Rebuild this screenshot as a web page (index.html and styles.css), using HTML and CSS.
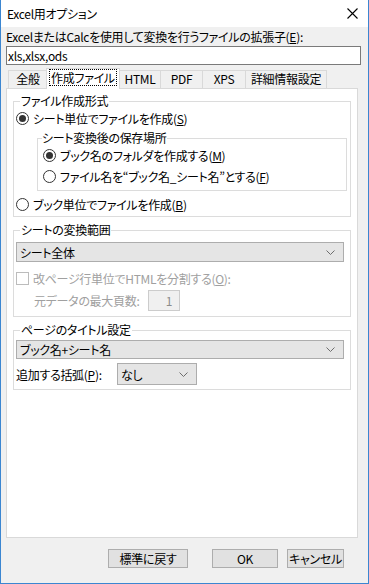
FILE: index.html
```html
<!DOCTYPE html>
<html lang="ja">

<head>
    <meta charset="UTF-8">
    <title>Excel用オプション</title>
    <link rel="stylesheet" href="styles.css">
</head>

<body>
    <div class="window">
        <div class="titlebar">
            <span class="title">Excel用オプション</span>
            <svg class="close" width="11" height="11" viewBox="0 0 11 11">
                <path d="M0.5 0.5 L10.5 10.5 M10.5 0.5 L0.5 10.5" stroke="#000" stroke-width="1.1" fill="none" />
            </svg>
        </div>

        <div class="client">
            <div class="ext-label">ExcelまたはCalcを使用して変換を行うファイルの拡張子(<u>E</u>):</div>
            <div class="textbox">xls,xlsx,ods</div>

            <div class="tabs">
                <div class="tab t-general">全般</div>
                <div class="tab t-file active"><span class="focus">作成ファイル</span></div>
                <div class="tab t-html">HTML</div>
                <div class="tab t-pdf">PDF</div>
                <div class="tab t-xps">XPS</div>
                <div class="tab t-detail">詳細情報設定</div>
            </div>

            <div class="panel">
                <fieldset class="group g-format">
                    <legend>ファイル作成形式</legend>
                    <div class="opt"><span class="radio on"></span><span>シート単位でファイルを作成(<u>S</u>)</span></div>
                    <fieldset class="group inner">
                        <legend>シート変換後の保存場所</legend>
                        <div class="opt"><span class="radio on"></span><span>ブック名のフォルダを作成する(<u>M</u>)</span></div>
                        <div class="opt"><span class="radio"></span><span>ファイル名を“ブック名_シート名”とする(<u>F</u>)</span></div>
                    </fieldset>
                    <div class="opt opt-book"><span class="radio"></span><span>ブック単位でファイルを作成(<u>B</u>)</span></div>
                </fieldset>

                <fieldset class="group g-range">
                    <legend>シートの変換範囲</legend>
                    <div class="combo wide">
                        <span>シート全体</span>
                        <svg class="arrow" width="9" height="5" viewBox="0 0 9 5"><path d="M0.5 0.5 L4.5 4.5 L8.5 0.5" stroke="#6d6d6d" fill="none" /></svg>
                    </div>
                    <div class="opt disabled"><span class="check"></span><span>改ページ行単位でHTMLを分割する(<u>O</u>):</span></div>
                    <div class="spin-row disabled">
                        <span class="spin-label">元データの最大頁数:</span>
                        <span class="spin">1</span>
                    </div>
                </fieldset>

                <fieldset class="group g-title">
                    <legend>ページのタイトル設定</legend>
                    <div class="combo wide">
                        <span>ブック名+シート名</span>
                        <svg class="arrow" width="9" height="5" viewBox="0 0 9 5"><path d="M0.5 0.5 L4.5 4.5 L8.5 0.5" stroke="#6d6d6d" fill="none" /></svg>
                    </div>
                    <div class="paren-row">
                        <span class="paren-label">追加する括弧(<u>P</u>):</span>
                        <div class="combo small">
                            <span>なし</span>
                            <svg class="arrow" width="9" height="5" viewBox="0 0 9 5"><path d="M0.5 0.5 L4.5 4.5 L8.5 0.5" stroke="#6d6d6d" fill="none" /></svg>
                        </div>
                    </div>
                </fieldset>
            </div>

            <div class="buttons">
                <button class="btn b-reset">標準に戻す</button>
                <button class="btn b-ok">OK</button>
                <button class="btn b-cancel">キャンセル</button>
            </div>
        </div>
    </div>
</body>

</html>
```

FILE: styles.css
```css
* {
    margin: 0;
    padding: 0;
    box-sizing: border-box;
}

body {
    font-family: "Noto Sans CJK JP", "Liberation Sans", sans-serif;
    font-size: 12px;
    font-feature-settings: "palt";
    letter-spacing: -0.3px;
    color: #000;
    background: #fff;
}

u {
    text-decoration: underline;
    text-underline-offset: 1px;
}

.window {
    width: 369px;
    height: 584px;
    display: flex;
    flex-direction: column;
    background: #f0f0f0;
    border: 1px solid #3b86d1;
    border-top: none;
}

.titlebar {
    height: 27px;
    flex: none;
    display: flex;
    align-items: center;
    justify-content: space-between;
    padding: 0 10px 0 6px;
    background: #fff;
}

.title {
    line-height: 14px;
}

.client {
    flex: 1;
    display: flex;
    flex-direction: column;
    padding: 3px 7px 0 5px;
}

.ext-label {
    height: 14px;
    line-height: 14px;
}

.textbox {
    margin-top: 2px;
    height: 19px;
    line-height: 17px;
    padding-left: 1px;
    background: #fff;
    border: 1px solid #7a7a7a;
}

/* tabs */
.tabs {
    margin-top: 3px;
    height: 20px;
    display: flex;
    align-items: flex-end;
    position: relative;
    z-index: 1;
}

.tab {
    height: 18px;
    line-height: 16px;
    text-align: center;
    background: #f0f0f0;
    border: 1px solid #d9d9d9;
    border-bottom: none;
    margin-left: -1px;
}

.tab.active {
    height: 21px;
    margin-bottom: -1px;
    background: #fff;
    position: relative;
    z-index: 2;
    padding-top: 1px;
}

.focus {
    display: inline-block;
    line-height: 15px;
    padding: 0 1px;
    outline: 1px dotted #000;
    outline-offset: 0;
}

.t-general { width: 40px; margin-left: 2px; }
.t-file { width: 74px; margin-left: -2px; }
.t-html { width: 42px; }
.t-pdf { width: 43px; }
.t-xps { width: 44px; }
.t-detail { width: 82px; }

.panel {
    flex: 1;
    margin-right: 3px;
    padding: 5px 6px;
    background: #fff;
    border: 1px solid #d9d9d9;
}

/* group boxes */
.group {
    border: 1px solid #dcdcdc;
    padding: 0 3px 0 2px;
}

.group legend {
    line-height: 14px;
    margin-left: 4px;
    padding: 0 1px;
}

.group + .group {
    margin-top: 6px;
}

.g-format {
    padding-bottom: 1px;
}

.inner {
    margin: 2px 0 0 21px;
    padding: 0 0 3px 5px;
}

.inner legend {
    margin-left: -1px;
    padding: 0 1px 0 0;
}

.opt {
    height: 21px;
    display: flex;
    align-items: center;
    gap: 4px;
    white-space: nowrap;
}

.opt-book {
    margin-top: 3px;
}

.radio {
    width: 13px;
    height: 13px;
    flex: none;
    border: 1px solid #333;
    border-radius: 50%;
    background: #fff;
    position: relative;
}

.radio.on::after {
    content: "";
    position: absolute;
    left: 2px;
    top: 2px;
    width: 7px;
    height: 7px;
    border-radius: 50%;
    background: #333;
}

.check {
    width: 13px;
    height: 13px;
    flex: none;
    border: 1px solid #bcbcbc;
    background: #fff;
}

.disabled {
    color: #a0a0a0;
}

/* combo boxes */
.combo {
    height: 20px;
    display: flex;
    align-items: center;
    justify-content: space-between;
    padding: 0 8px 0 3px;
    background: #e5e5e5;
    border: 1px solid #adadad;
}

.combo.wide {
    width: 328px;
}

.g-range .combo.wide {
    margin-top: 5px;
}

.g-range .opt {
    margin-top: 6px;
}

.spin-row {
    height: 22px;
    display: flex;
    align-items: center;
    padding-left: 18px;
}

.spin-label {
    width: 114px;
}

.spin {
    width: 32px;
    height: 21px;
    line-height: 19px;
    text-align: right;
    padding-right: 7px;
    background: #f0f0f0;
    border: 1px solid #cccccc;
    color: #8c8c8c;
}

.g-range {
    padding-bottom: 5px;
}

.g-title {
    padding-bottom: 4px;
}

.g-title .combo.wide {
    margin-top: 3px;
    height: 19px;
}

.paren-row {
    margin-top: 4px;
    display: flex;
    align-items: center;
}

.paren-label {
    width: 101px;
}

.combo.small {
    width: 80px;
    height: 22px;
}

/* buttons */
.buttons {
    height: 45px;
    flex: none;
    display: flex;
    align-items: flex-start;
    padding: 11px 17px 0 0;
    justify-content: flex-end;
}

.btn {
    height: 19px;
    font: inherit;
    letter-spacing: inherit;
    line-height: 17px;
    background: #e1e1e1;
    border: 1px solid #adadad;
    color: #000;
}

.b-reset { width: 80px; }
.b-ok { width: 66px; margin-left: 24px; }
.b-cancel { width: 57px; margin-left: 9px; }
```
